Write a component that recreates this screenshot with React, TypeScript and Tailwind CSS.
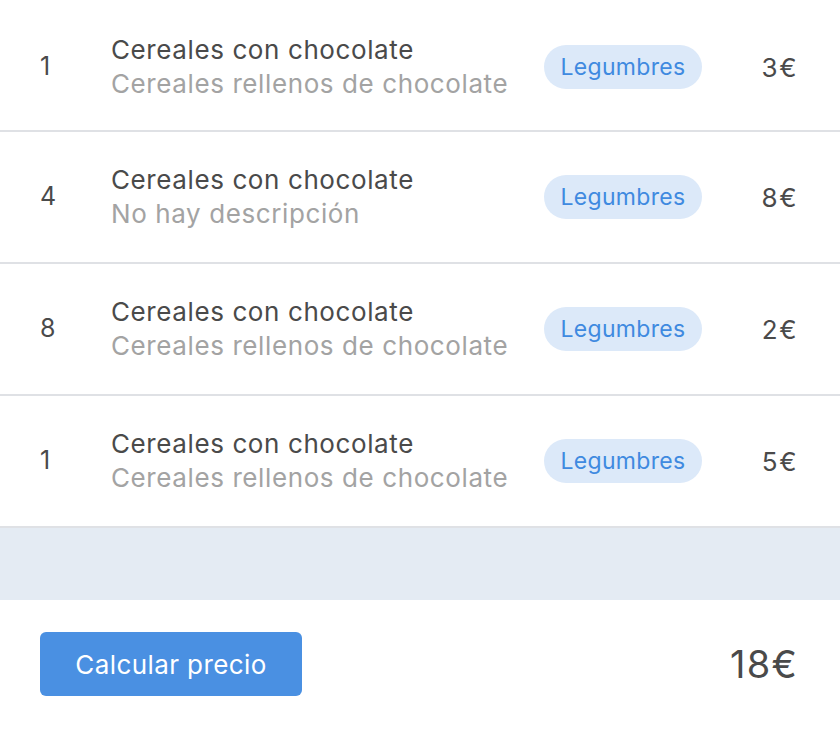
const items = [
  { qty: 1, name: "Cereales con chocolate", desc: "Cereales rellenos de chocolate", tag: "Legumbres", price: 3 },
  { qty: 4, name: "Cereales con chocolate", desc: "No hay descripción", tag: "Legumbres", price: 8 },
  { qty: 8, name: "Cereales con chocolate", desc: "Cereales rellenos de chocolate", tag: "Legumbres", price: 2 },
  { qty: 1, name: "Cereales con chocolate", desc: "Cereales rellenos de chocolate", tag: "Legumbres", price: 5 },
];

export default function App() {
  const total = items.reduce((s, i) => s + i.price, 0);

  return (
    <div className="w-[840px] h-[730px] bg-white font-['Inter',sans-serif] text-[#4a4a4a]">
      {/* Lista de productos */}
      <ul>
        {items.map((item, idx) => (
          <li
            key={idx}
            className={`flex items-center border-b-2 border-[#dfe1e5] pl-10 pr-[42px] ${
              idx === 0 ? "h-[132px] pt-[4px]" : "h-[132px]"
            }`}
          >
            <span className="w-[71px] text-[25px] tracking-[0.5px]">{item.qty}</span>
            <div className="flex flex-1 flex-col text-[26px] leading-[34px] tracking-[0.6px]">
              <span className="text-[#4a4a4a]">{item.name}</span>
              <span className="text-[#a3a3a3]">{item.desc}</span>
            </div>
            <span className="flex h-[44px] w-[158px] items-center justify-center rounded-full bg-[#dce9f9] text-[23px] tracking-[0.3px] text-[#3f8ae0]">
              {item.tag}
            </span>
            <span className="w-[96px] text-right text-[26px] tracking-[1.5px]">{item.price}€</span>
          </li>
        ))}
      </ul>

      {/* Banda gris */}
      <div className="h-[72px] bg-[#e4ebf3]" />

      {/* Pie */}
      <div className="flex items-center justify-between pl-10 pr-[42px] pt-[32px]">
        <button className="h-[64px] w-[262px] rounded-[6px] bg-[#4a90e2] text-[26px] tracking-[0.4px] text-white">
          Calcular precio
        </button>
        <span className="text-[38px] tracking-[1.2px]">{total}€</span>
      </div>
    </div>
  );
}
